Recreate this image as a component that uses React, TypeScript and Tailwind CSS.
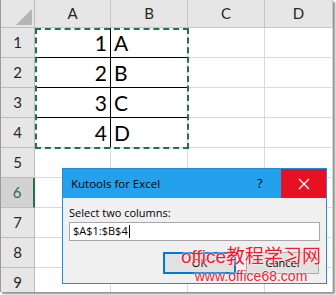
import React from "react";

const cols = [
  { label: "A", w: "w-[76px]" },
  { label: "B", w: "w-[77px]" },
  { label: "C", w: "w-[77px]" },
  { label: "D", w: "w-[68px]" },
];

const data: Record<number, [string, string]> = {
  1: ["1", "A"],
  2: ["2", "B"],
  3: ["3", "C"],
  4: ["4", "D"],
};

const rows = [1, 2, 3, 4, 5, 6, 7, 8, 9];

export default function App() {
  return (
    <div className="w-[336px] h-[295px] bg-white overflow-hidden">
      <div
        className="relative w-[333px] h-[292px] bg-white border-l border-[#9a9a9a] shadow-[2px_2px_2px_rgba(0,0,0,0.45)] overflow-hidden"
        style={{ fontFamily: "Lato, 'Liberation Sans', sans-serif" }}
      >
        {/* HEADER ROW */}
        <div className="flex h-[28px]">
          <div className="relative w-[34px] h-full bg-[#e6e6e6] border-r border-b border-[#bdbdbd]">
            <div className="absolute right-[2px] bottom-[2px] w-0 h-0 border-l-[16px] border-l-transparent border-b-[16px] border-b-[#b4b4b4]" />
          </div>
          {cols.map((c) => (
            <div
              key={c.label}
              className={`${c.w} h-full bg-[#e6e6e6] border-r border-b border-[#c6c6c6] flex items-center justify-center text-[15px] text-[#262626]`}
            >
              {c.label}
            </div>
          ))}
        </div>

        {/* GRID ROWS */}
        {rows.map((r) => {
          const d = data[r];
          const inData = !!d;
          const selected = r === 6;
          return (
            <div key={r} className="flex h-[30px]">
              <div
                className={`w-[34px] h-full flex items-center justify-center text-[15px] border-b border-[#bdbdbd] ${
                  selected
                    ? "bg-[#d2d2d2] text-[#217346] border-r-2 border-r-[#217346]"
                    : "bg-[#e6e6e6] text-[#262626] border-r border-r-[#bdbdbd]"
                }`}
              >
                {r}
              </div>
              <div
                className={`w-[76px] h-full flex items-center justify-end pr-[3px] text-[21px] text-black border-r ${
                  inData ? "border-r-black" : "border-r-[#d9d9d9]"
                } ${inData && r < 4 ? "border-b border-b-black" : "border-b border-b-[#d9d9d9]"}`}
              >
                {d ? d[0] : ""}
              </div>
              <div
                className={`w-[77px] h-full flex items-center pl-[3px] text-[21px] text-black border-r border-r-[#d9d9d9] ${
                  inData && r < 4 ? "border-b border-b-black" : "border-b border-b-[#d9d9d9]"
                }`}
              >
                {d ? d[1] : ""}
              </div>
              <div className="w-[77px] h-full border-r border-b border-[#d9d9d9]" />
              <div className="w-[68px] h-full border-r border-b border-[#d9d9d9]" />
            </div>
          );
        })}

        {/* MARCHING ANTS */}
        <div className="absolute left-[34px] top-[28px] w-[154px] h-[121px] border-2 border-dashed border-[#217346] pointer-events-none" />

        {/* DIALOG */}
        <div
          className="absolute left-[61px] top-[168px] w-[265px] h-[116px] border border-[#1b8fdd] bg-[#f0f0f0] flex flex-col"
          style={{ fontFamily: "'Open Sans', 'Noto Sans', sans-serif" }}
        >
          <div className="h-[29px] bg-[#24a1ec] flex items-center shrink-0">
            <div className="flex-1 pl-[8px] text-[11.5px] text-black">Kutools for Excel</div>
            <div className="w-[24px] text-[13px] text-black">?</div>
            <div className="w-[45px] h-full bg-[#e81123] flex items-center justify-center">
              <svg width="12" height="12" viewBox="0 0 12 12">
                <path d="M1 1 L11 11 M11 1 L1 11" stroke="white" strokeWidth="1.3" />
              </svg>
            </div>
          </div>
          <div className="flex flex-col px-[6px] pt-[8px]">
            <div className="text-[11px] text-black leading-[14px]">Select two columns:</div>
            <div className="mt-[2px] h-[19px] w-[251px] bg-white border border-[#a8a8a8] flex items-center px-[3px] text-[11px] text-black">
              $A$1:$B$4
              <span className="inline-block w-px h-[13px] bg-black ml-px" />
            </div>
            <div className="flex justify-end gap-[10px] mt-[11px] pr-[1px]">
              <div className="w-[73px] h-[22px] bg-[#e1e1e1] border-2 border-[#0078d7] flex items-center justify-center text-[11px] text-black">
                OK
              </div>
              <div className="w-[73px] h-[22px] bg-[#e1e1e1] border border-[#adadad] flex items-center justify-center text-[11px] text-black">
                Cancel
              </div>
            </div>
          </div>
        </div>

        {/* WATERMARK */}
        <div
          className="absolute left-[180px] top-[246px] flex flex-col items-center text-[#f5192d] pointer-events-none"
          style={{
            fontFamily: "'Liberation Sans', 'Noto Sans CJK SC', sans-serif",
            textShadow: "0 0 2px #fff, 0 0 2px #fff",
          }}
        >
          <div className="text-[19px] leading-[22px] whitespace-nowrap">office教程学习网</div>
          <div className="text-[14px] leading-[16px] whitespace-nowrap">www.office68.com</div>
        </div>
      </div>
    </div>
  );
}
